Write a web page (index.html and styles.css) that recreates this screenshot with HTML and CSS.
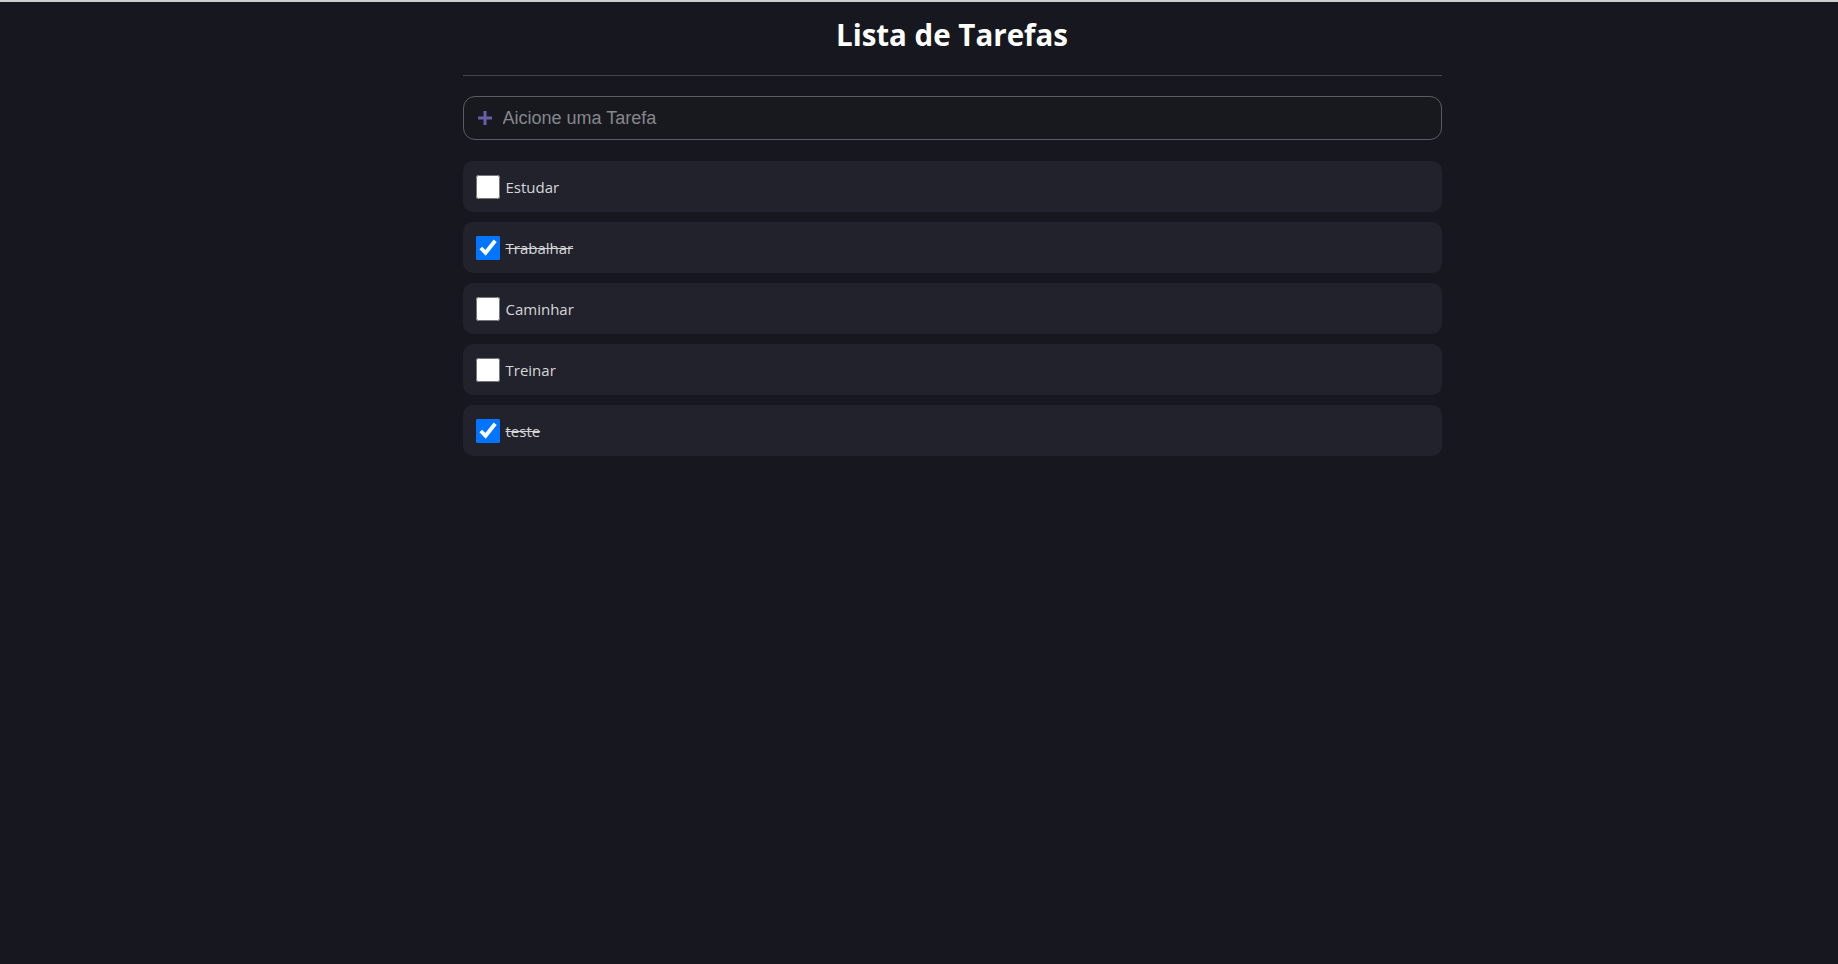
FILE: index.html
```html
<!DOCTYPE html>
<html lang="pt-BR">
<head>
<meta charset="utf-8">
<title>Lista de Tarefas</title>
<link rel="stylesheet" href="styles.css">
</head>
<body>
<main class="app">
  <h1 class="title">Lista de Tarefas</h1>
  <hr class="divider">
  <label class="add-box">
    <svg class="plus" width="16" height="16" viewBox="0 0 16 16" aria-hidden="true">
      <rect x="6.5" y="1" width="3" height="14" rx="0.5" fill="#6b5ea8"/>
      <rect x="1" y="6.5" width="14" height="3" rx="0.5" fill="#6b5ea8"/>
    </svg>
    <input class="add-input" type="text" placeholder="Aicione uma Tarefa">
  </label>
  <ul class="tasks">
    <li class="task"><input class="check" type="checkbox"><span class="task-text">Estudar</span></li>
    <li class="task done"><input class="check" type="checkbox" checked><span class="task-text">Trabalhar</span></li>
    <li class="task"><input class="check" type="checkbox"><span class="task-text">Caminhar</span></li>
    <li class="task"><input class="check" type="checkbox"><span class="task-text">Treinar</span></li>
    <li class="task done"><input class="check" type="checkbox" checked><span class="task-text">teste</span></li>
  </ul>
</main>
</body>
</html>
```
FILE: styles.css
```css
html, body {
  height: 100%;
}
body {
  margin: 0;
  padding-left: 66px;
  box-sizing: border-box;
  background: #17181f;
  border-top: 2px solid #cfcfcf;
  font-family: "Open Sans", "Noto Sans", sans-serif;
  color: #d6d6d6;
}
.app {
  width: 979px;
  margin: 0 auto;
}
.title {
  margin: 13px 0 0;
  font-size: 29.5px;
  line-height: 40px;
  font-weight: 700;
  text-align: center;
  color: #ffffff;
}
.divider {
  margin: 20px 0 0;
  border: 0;
  height: 1px;
  background: #45464d;
}
.add-box {
  margin-top: 20px;
  height: 44px;
  box-sizing: border-box;
  border: 1px solid #5c5c60;
  border-radius: 12px;
  display: flex;
  align-items: center;
  padding-left: 13px;
  gap: 10px;
  background: #18191f;
}
.plus {
  flex: none;
}
.add-input {
  flex: 1;
  background: transparent;
  border: 0;
  outline: none;
  font-family: "Liberation Sans", Arial, sans-serif;
  font-size: 18px;
  color: #e0e0e0;
  padding: 0;
}
.add-input::placeholder {
  color: #86878c;
}
.tasks {
  list-style: none;
  margin: 21px 0 0;
  padding: 0;
  display: flex;
  flex-direction: column;
  gap: 10px;
}
.task {
  height: 51px;
  box-sizing: border-box;
  background: #21222c;
  border-radius: 10px;
  display: flex;
  align-items: center;
  padding-left: 13px;
  gap: 6px;
}
.check {
  width: 24px;
  height: 24px;
  margin: 0;
  flex: none;
}
.task-text {
  font-size: 15px;
  color: #d6d6d8;
}
.task.done .task-text {
  text-decoration: line-through;
}
```
